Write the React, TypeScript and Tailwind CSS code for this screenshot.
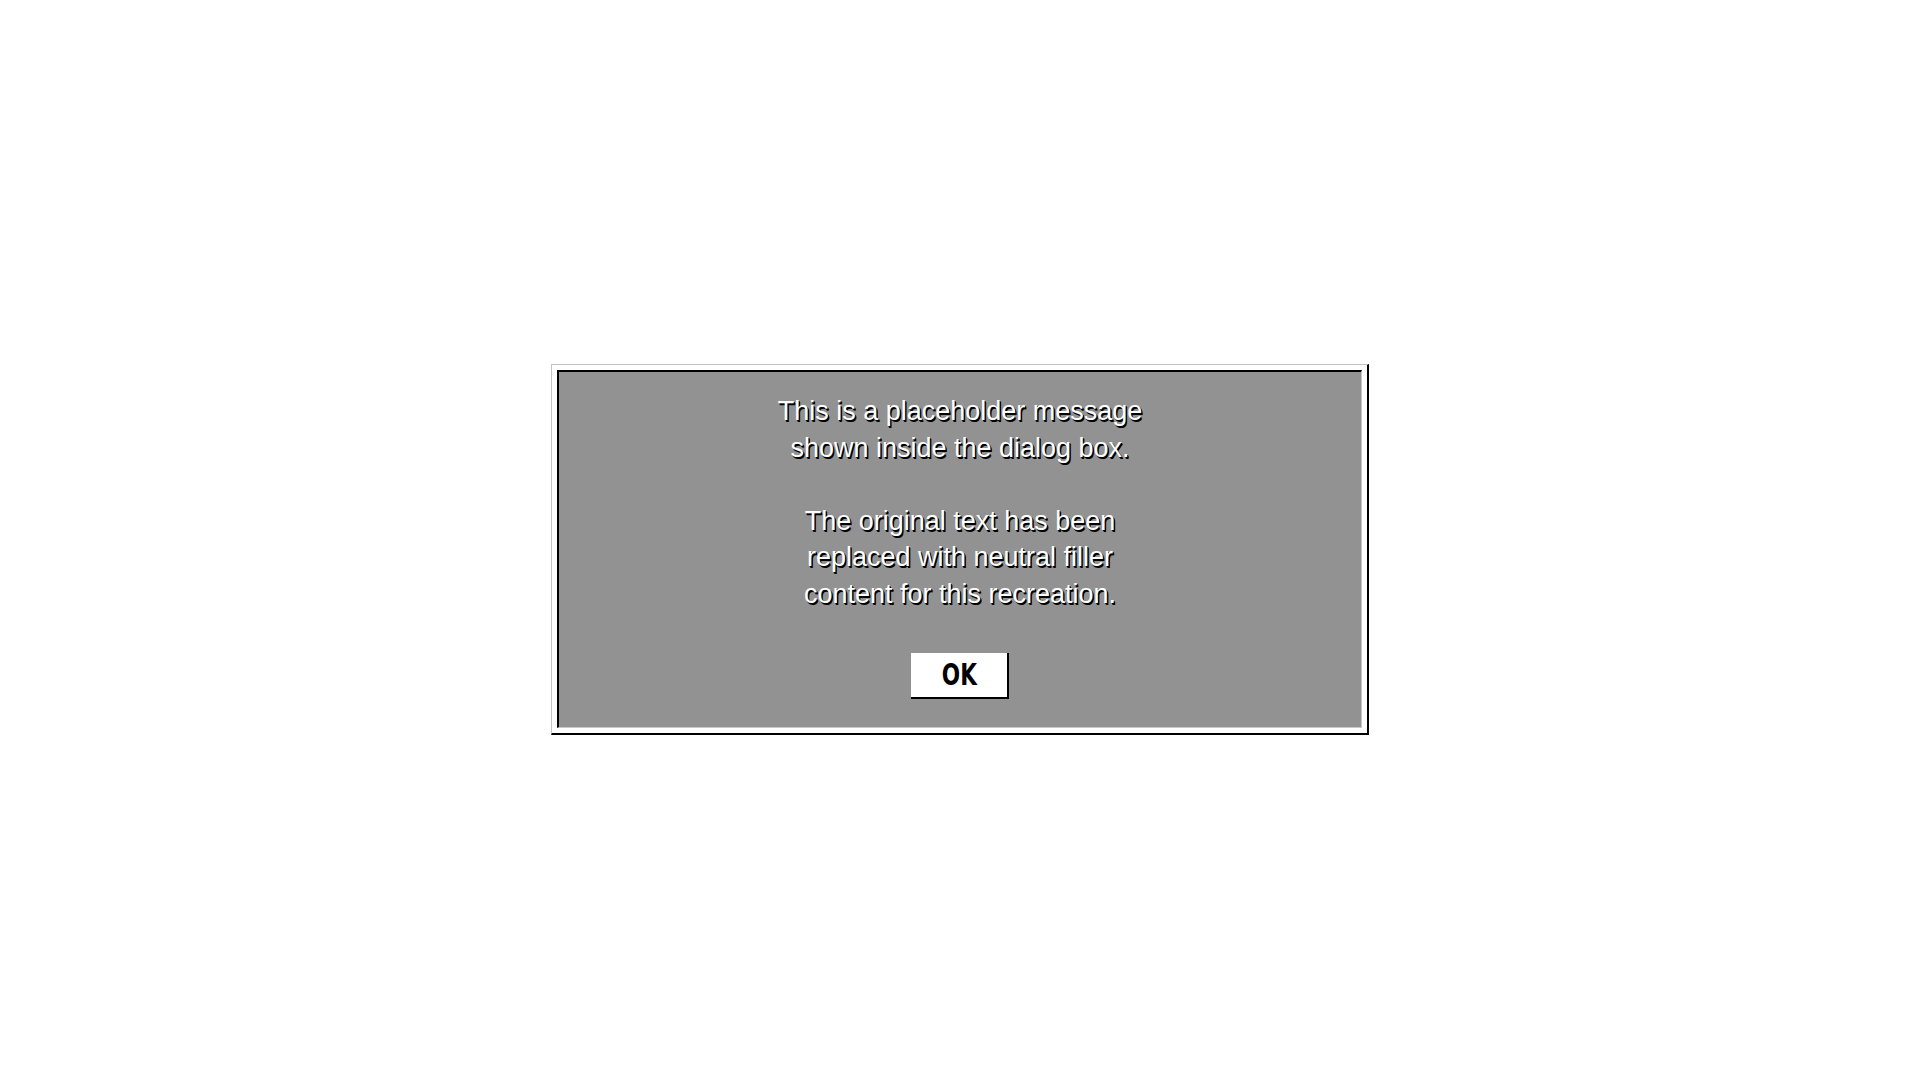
export default function App() {
  return (
    <div className="w-[1920px] h-[1080px] bg-white flex items-start justify-center pt-[364px]">
      <div className="w-[818px] h-[371px] bg-white border-t border-l border-t-[#c4c4c4] border-l-[#c4c4c4] border-b-2 border-r-2 border-b-black border-r-black p-[5px]">
        <div className="w-full h-full bg-[#929292] border-t-2 border-l-2 border-t-black border-l-black border-b border-r border-b-[#c8c8c8] border-r-[#c8c8c8] flex flex-col items-center pt-[21px]">
          <div
            className="text-white text-center text-[27px] leading-[36.6px] [text-shadow:1px_1px_0_#000,1.5px_1.5px_0_#000]"
            style={{ fontFamily: '"Liberation Sans", Arial, sans-serif' }}
          >
            <p>This is a placeholder message</p>
            <p>shown inside the dialog box.</p>
            <p>&nbsp;</p>
            <p>The original text has been</p>
            <p>replaced with neutral filler</p>
            <p>content for this recreation.</p>
          </div>
          <button className="mt-[40px] w-[98px] h-[46px] bg-white border-r-2 border-b-2 border-r-black border-b-black flex items-center justify-center">
            <span
              className="inline-block text-black font-bold text-[30px] leading-none scale-x-[0.72]"
              style={{ fontFamily: '"DejaVu Sans", sans-serif' }}
            >
              OK
            </span>
          </button>
        </div>
      </div>
    </div>
  );
}
